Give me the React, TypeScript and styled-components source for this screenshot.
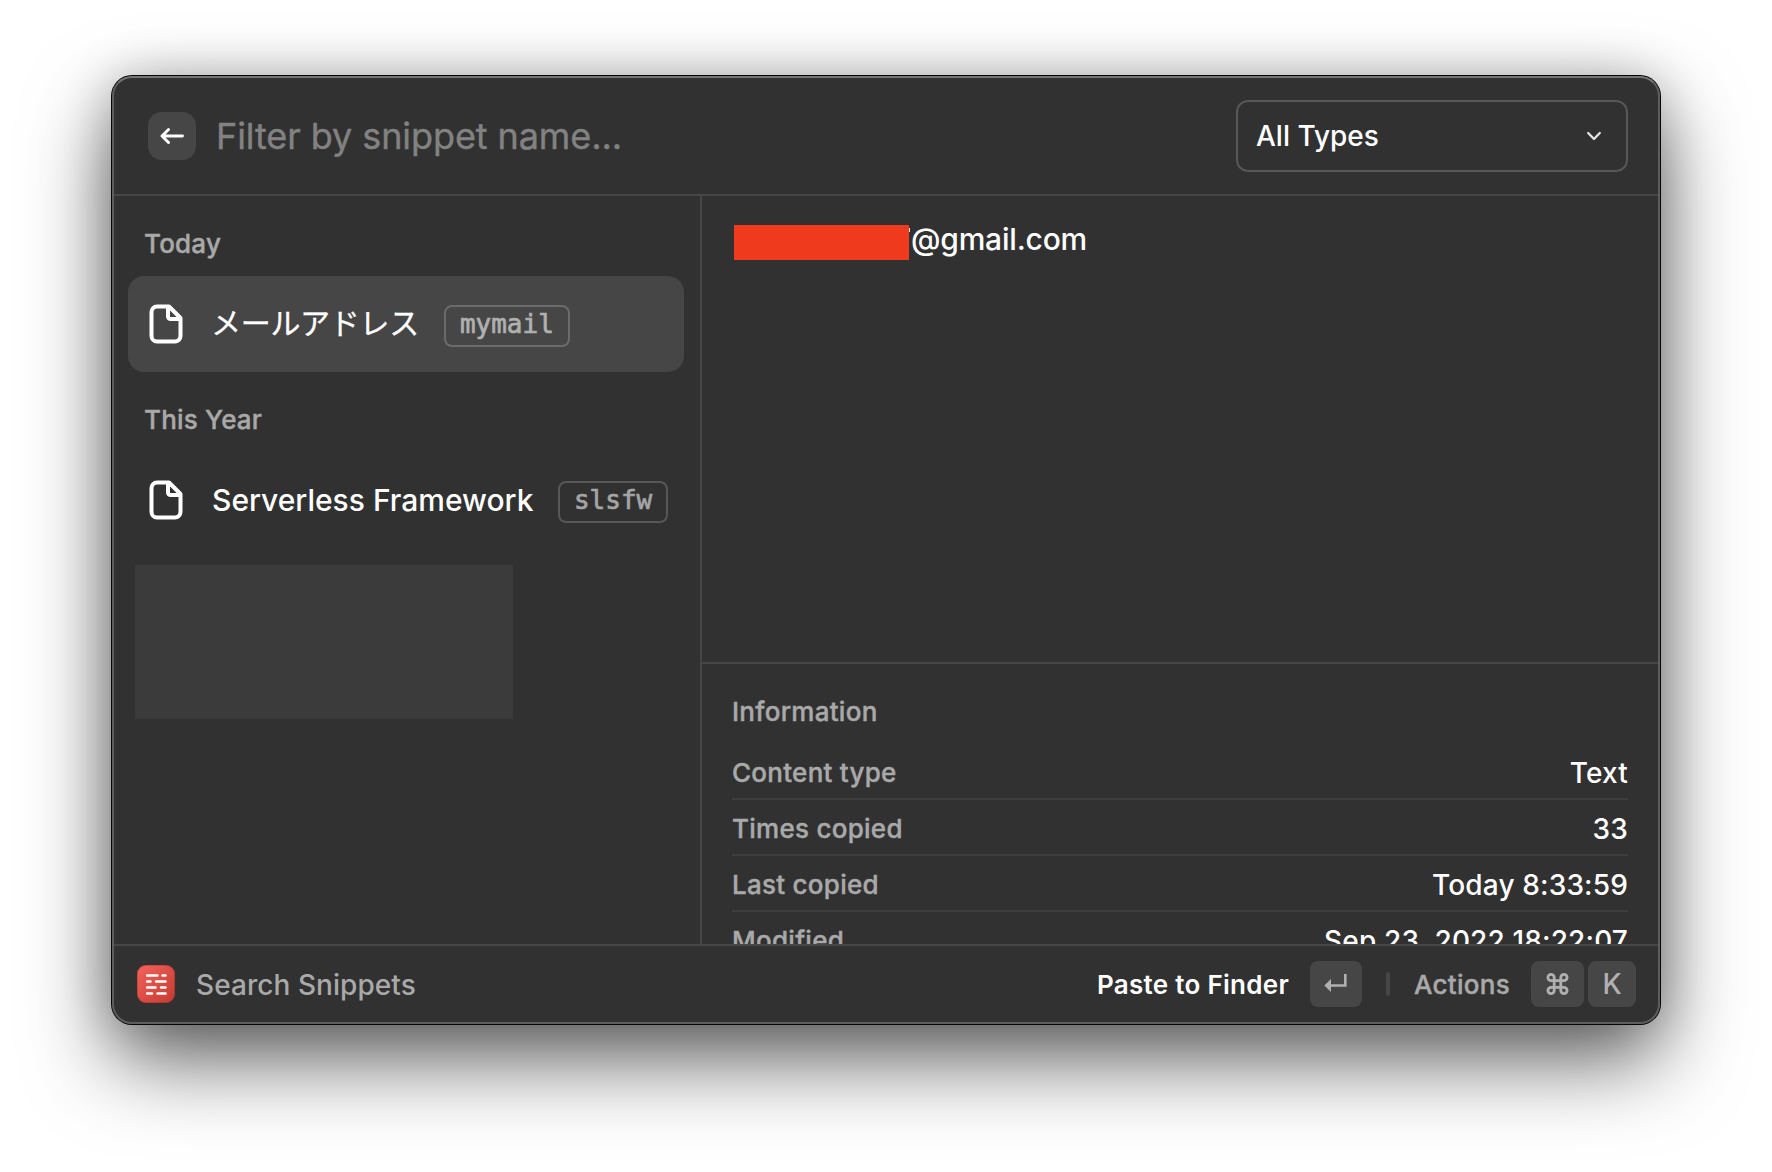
import React from "react";
import styled, { createGlobalStyle } from "styled-components";

const GlobalStyle = createGlobalStyle`
  * { box-sizing: border-box; }
  body {
    margin: 0;
    background: #fff;
    font-family: Inter, "Noto Sans CJK JP", sans-serif;
  }
  svg { flex: none; }
`;

const Desktop = styled.div`
  width: 1772px;
  height: 1172px;
  padding: 76px 112px;
  overflow: hidden;
  background: #fff;
`;

const Window = styled.main`
  position: relative;
  width: 1548px;
  height: 948px;
  display: flex;
  flex-direction: column;
  border-radius: 20px;
  background: #313131;
  box-shadow: 0 0 0 1px #060606, 0 36px 84px rgba(0, 0, 0, 0.62), 0 0 50px rgba(0, 0, 0, 0.2);

  &::after {
    content: "";
    position: absolute;
    inset: 0;
    border: 2px solid #5c5d5d;
    border-top-color: #747575;
    border-radius: 20px;
    pointer-events: none;
  }
`;

const Header = styled.header`
  flex: none;
  height: 120px;
  display: flex;
  align-items: center;
  padding: 2px 32px 0 36px;
  border-bottom: 2px solid #464646;
`;

const BackButton = styled.button`
  width: 48px;
  height: 48px;
  padding: 0;
  border: 0;
  border-radius: 14px;
  display: grid;
  place-items: center;
  background: #464646;
`;

const Placeholder = styled.div`
  flex: 1;
  margin-left: 20px;
  font-size: 36px;
  line-height: 48px;
  letter-spacing: -0.08px;
  -webkit-text-stroke: 0.4px currentColor;
  color: #828282;
`;

const Dropdown = styled.div`
  width: 392px;
  height: 72px;
  padding: 0 23px 0 18px;
  display: flex;
  align-items: center;
  justify-content: space-between;
  border: 2px solid #575757;
  border-radius: 12px;
  color: #fff;
  font-size: 28px;
  font-weight: 500;
`;

const Body = styled.div`
  flex: 1;
  min-height: 0;
  display: flex;
`;

const Sidebar = styled.aside`
  width: 590px;
  flex: none;
  padding: 0 16px;
  border-right: 2px solid #464646;
`;

const SectionTitle = styled.h2`
  margin: 0;
  padding: 32px 16px 16px;
  font-size: 26px;
  line-height: 32px;
  font-weight: 500;
  letter-spacing: 0.2px;
  -webkit-text-stroke: 0.4px currentColor;
  color: #a9a9a9;
`;

const Row = styled.div<{ $selected?: boolean }>`
  width: 556px;
  height: 96px;
  padding: 0 10px 0 21px;
  display: flex;
  align-items: center;
  border-radius: 16px;
  background: ${(p) => (p.$selected ? "#464646" : "transparent")};
`;

const RowTitle = styled.span<{ $japanese?: boolean }>`
  margin-left: ${(p) => (p.$japanese ? 28 : 29)}px;
  margin-bottom: ${(p) => (p.$japanese ? 2 : 0)}px;
  white-space: nowrap;
  font-size: 30px;
  line-height: 40px;
  font-weight: ${(p) => (p.$japanese ? 400 : 500)};
  letter-spacing: ${(p) => (p.$japanese ? -0.3 : 0)}px;
  -webkit-text-stroke: ${(p) => (p.$japanese ? 0.3 : 0)}px currentColor;
  color: #fff;
`;

const Tag = styled.span<{ $dim?: boolean }>`
  height: 42px;
  margin: 4px 0 0 ${(p) => (p.$dim ? 24.5 : 25)}px;
  padding: 0 14px;
  border: 2px solid ${(p) => (p.$dim ? "#575757" : "#6b6b6b")};
  border-radius: 8px;
  font-family: "DejaVu Sans Mono", monospace;
  font-size: 26px;
  line-height: 35px;
  -webkit-text-stroke: 0.7px currentColor;
  color: ${(p) => (p.$dim ? "#a5a5a5" : "#b0b0b0")};
`;

const HiddenEntry = styled.div`
  width: 378px;
  height: 154px;
  margin: 17px 0 0 7px;
  background: #3b3b3b;
`;

const Detail = styled.section`
  flex: 1;
  min-width: 0;
  display: flex;
  flex-direction: column;
`;

const Preview = styled.div`
  flex: none;
  height: 468px;
  padding: 23px 32px;
  display: flex;
  align-items: flex-start;
  border-bottom: 2px solid #464646;
  color: #fff;
  font-size: 30px;
  font-weight: 500;
  line-height: 40px;
  letter-spacing: -0.2px;
`;

const Redaction = styled.span`
  position: relative;
  width: 175px;
  height: 35px;
  margin: 6px 2px 0 0;
  background: #f03a1e;

  &::after {
    content: "";
    position: absolute;
    left: 175px;
    top: 3px;
    width: 1px;
    height: 4px;
    background: #e8e8e8;
  }
`;

const Info = styled.div`
  flex: 1;
  min-height: 0;
  overflow: hidden;
  padding: 32px 32px 0 30px;
`;

const InfoTitle = styled.h2`
  margin: 0 0 16px;
  font-size: 26px;
  line-height: 32px;
  font-weight: 500;
  letter-spacing: 0.27px;
  -webkit-text-stroke: 0.4px currentColor;
  color: #a9a9a9;
`;

const InfoRow = styled.div`
  height: 56px;
  display: flex;
  justify-content: space-between;
  border-bottom: 2px solid #3c3c3c;
  line-height: 58px;
`;

const InfoLabel = styled.span`
  font-size: 26px;
  font-weight: 500;
  letter-spacing: 0.27px;
  -webkit-text-stroke: 0.4px currentColor;
  color: #a9a9a9;
`;

const InfoValue = styled.span`
  font-size: 28px;
  font-weight: 500;
  letter-spacing: 0.15px;
  color: #fff;
`;

const Footer = styled.footer`
  flex: none;
  height: 80px;
  padding: 0 24px 2px 25px;
  display: flex;
  align-items: center;
  border-top: 2px solid #464646;
  color: #a9a9a9;
`;

const AppIcon = styled.span`
  width: 38px;
  height: 38px;
  display: grid;
  place-items: center;
  border-radius: 9px;
  background: linear-gradient(135deg, #f5625b, #c33a31);
  box-shadow: inset 0 0 0 1px rgba(110, 20, 20, 0.25);
`;

const AppName = styled.span`
  flex: 1;
  margin: 1px 0 0 21px;
  font-size: 28px;
  font-weight: 500;
  letter-spacing: 0.06px;
`;

const ActionText = styled.span<{ $primary?: boolean }>`
  font-size: 26px;
  font-weight: ${(p) => (p.$primary ? 600 : 500)};
  letter-spacing: 0.28px;
  -webkit-text-stroke: ${(p) => (p.$primary ? 0 : 0.4)}px currentColor;
  color: ${(p) => (p.$primary ? "#fff" : "#a9a9a9")};
`;

const Key = styled.kbd<{ $width: number; $gap: number }>`
  width: ${(p) => p.$width}px;
  height: 46px;
  margin-left: ${(p) => p.$gap}px;
  display: grid;
  place-items: center;
  border-radius: 8px;
  background: #464646;
  color: #b0b0b0;
  font: 500 28px Inter, sans-serif;
`;

const Separator = styled.i`
  width: 4px;
  height: 24px;
  margin: 0 24px;
  border-radius: 2px;
  background: #464646;
`;

const FileIcon = () => (
  <svg width="34" height="40" viewBox="0 0 34 40" fill="none" stroke="#fff" strokeWidth="4" strokeLinejoin="round">
    <path d="M8 2.500H20L31.500 14V32A5.500 5.500 0 0 1 26 37.500H8A5.500 5.500 0 0 1 2.500 32V8A5.500 5.500 0 0 1 8 2.500Z" />
    <path d="M19 3V12.500A2.500 2.500 0 0 0 21.500 15H31" />
  </svg>
);

// Start x, y and length of each dash in the snippets glyph
const SNIPPET_DASHES = [
  [1, 1.5, 10.5], [16.5, 1.5, 3],
  [1, 7.5, 3.5], [10, 7.5, 9.5],
  [1, 13.5, 8.5], [15, 13.5, 4.5],
  [1, 19.5, 5], [11.5, 19.5, 8],
];

const info = [
  ["Content type", "Text"],
  ["Times copied", "33"],
  ["Last copied", "Today 8:33:59"],
  ["Modified", "Sep 23, 2022 18:22:07"],
];

export default function App() {
  return (
    <Desktop>
      <GlobalStyle />
      <Window>
        <Header>
          <BackButton aria-label="Back">
            <svg width="24" height="18" viewBox="0 0 24 18" fill="none" stroke="#fff" strokeWidth="2.9" strokeLinecap="round" strokeLinejoin="round">
              <path d="M22.500 9H2M8.500 2.500L2 9L8.500 15.500" />
            </svg>
          </BackButton>
          <Placeholder>Filter by snippet name...</Placeholder>
          <Dropdown>
            <span>All Types</span>
            <svg width="18" height="12" viewBox="0 0 18 12" fill="none" stroke="#e4e4e4" strokeWidth="2.300" strokeLinecap="round" strokeLinejoin="round">
              <path d="M3.200 3L9 9L14.800 3" />
            </svg>
          </Dropdown>
        </Header>
        <Body>
          <Sidebar>
            <SectionTitle>Today</SectionTitle>
            <Row $selected>
              <FileIcon />
              <RowTitle $japanese>メールアドレス</RowTitle>
              <Tag>mymail</Tag>
            </Row>
            <SectionTitle>This Year</SectionTitle>
            <Row>
              <FileIcon />
              <RowTitle>Serverless Framework</RowTitle>
              <Tag $dim>slsfw</Tag>
            </Row>
            <HiddenEntry />
          </Sidebar>
          <Detail>
            <Preview>
              <Redaction />
              <span>@gmail.com</span>
            </Preview>
            <Info>
              <InfoTitle>Information</InfoTitle>
              {info.map(([label, value]) => (
                <InfoRow key={label}>
                  <InfoLabel>{label}</InfoLabel>
                  <InfoValue>{value}</InfoValue>
                </InfoRow>
              ))}
            </Info>
          </Detail>
        </Body>
        <Footer>
          <AppIcon>
            <svg width="21" height="21" viewBox="0 0 21 21" stroke="#fff" strokeWidth="2.400" strokeLinecap="round">
              {SNIPPET_DASHES.map(([x, y, w]) => (
                <path key={`${x}-${y}`} d={`M${x} ${y}h${w}`} />
              ))}
            </svg>
          </AppIcon>
          <AppName>Search Snippets</AppName>
          <ActionText $primary>Paste to Finder</ActionText>
          <Key $width={52} $gap={21}>
            <svg width="24" height="22" viewBox="0 0 24 22" fill="none" stroke="#b0b0b0" strokeWidth="2.600">
              <path d="M21.300 1V12.500H5" />
              <path d="M0.300 12.500L7 6V19Z" fill="#b0b0b0" stroke="none" />
            </svg>
          </Key>
          <Separator />
          <ActionText>Actions</ActionText>
          <Key $width={53} $gap={21}>
            <svg width="24" height="24" viewBox="0.5 0 24 24" fill="none" stroke="#b0b0b0" strokeWidth="2.800">
              <path d="M8.700 8.700V5.550A3.150 3.150 0 1 0 5.550 8.700H18.450A3.150 3.150 0 1 0 15.300 5.550V18.450A3.150 3.150 0 1 0 18.450 15.300H5.550A3.150 3.150 0 1 0 8.700 18.450Z" />
            </svg>
          </Key>
          <Key $width={48} $gap={4}>K</Key>
        </Footer>
      </Window>
    </Desktop>
  );
}
